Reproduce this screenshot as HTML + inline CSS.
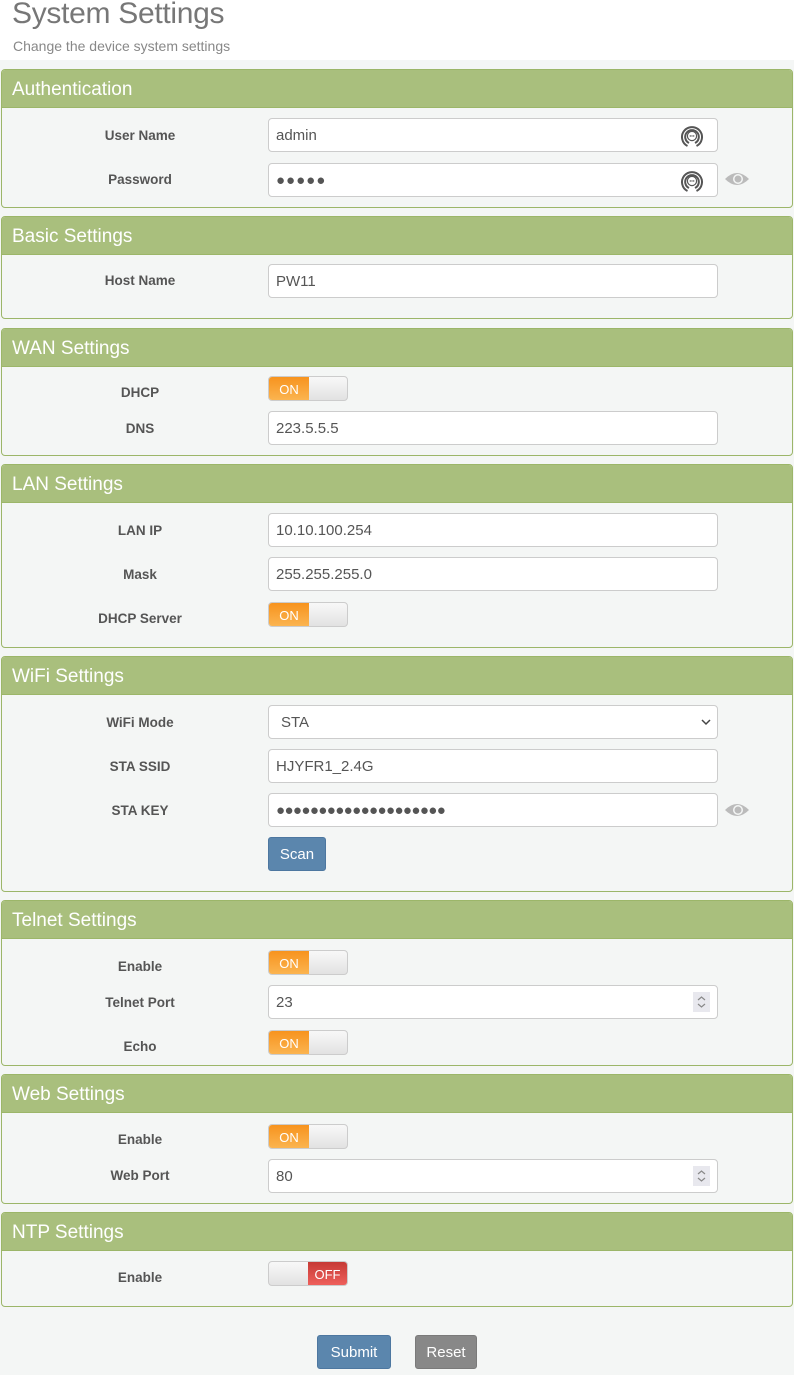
<!DOCTYPE html>
<html><head><meta charset="utf-8"><style>
*{box-sizing:border-box;margin:0;padding:0}
body{width:794px;height:1375px;background:#f4f6f5;font-family:"Liberation Sans",sans-serif;position:relative;overflow:hidden;color:#555}
.top{position:absolute;left:0;top:0;width:794px;height:60px;background:#fff}
h1{position:absolute;left:12px;top:-3px;font-size:30px;font-weight:300;color:#777;letter-spacing:-0.3px}
.sub{position:absolute;left:13px;top:38px;font-size:14px;color:#888}
.panel{position:absolute;left:1px;width:792px;border:1px solid #9cb669;border-radius:4px;background:#f4f6f5;overflow:hidden}
.ph{height:38px;background:#a9bf7d;color:#fff;font-size:19px;padding:9px 10px;border-bottom:1px solid #9cb669}
.lb{position:absolute;left:40px;width:200px;text-align:center;font-size:13.5px;font-weight:bold;color:#555;margin-top:1px}
.in{position:absolute;left:268px;width:450px;height:34px;background:#fff;border:1px solid #ccc;border-radius:4px;font-size:15px;color:#555;padding:8px 7px}
.tg{position:absolute;left:268px;width:80px;height:25px;border:1px solid #ccc;border-radius:4px;overflow:hidden;background:linear-gradient(#f8f8f8,#e2e2e2)}
.tg .on{position:absolute;left:0;top:0;width:40px;height:100%;background:linear-gradient(#f7931e,#fbb450);color:#fff;font-size:13px;text-align:center;line-height:25px}
.tg .off{position:absolute;right:0;top:0;width:39px;height:100%;background:linear-gradient(#c63a35,#ee5f5b);color:#fff;font-size:13px;text-align:center;line-height:25px}
.eye{position:absolute;left:724px;width:26px;height:16px}
.btn{position:absolute;height:34px;border-radius:3px;color:#fff;font-size:15px;text-align:center;line-height:34px}
.kc{position:absolute;right:12px;top:4px;width:26px;height:26px}
.sp{position:absolute;right:7px;top:6px;width:17px;height:20px;background:#e8e8ee}
</style></head><body>
<div class="top"><h1>System Settings</h1><div class="sub">Change the device system settings</div></div>

<div class="panel" style="top:69px;height:139px"><div class="ph">Authentication</div></div>
<div class="panel" style="top:216px;height:103px"><div class="ph">Basic Settings</div></div>
<div class="panel" style="top:328px;height:128px"><div class="ph">WAN Settings</div></div>
<div class="panel" style="top:464px;height:184px"><div class="ph">LAN Settings</div></div>
<div class="panel" style="top:656px;height:236px"><div class="ph">WiFi Settings</div></div>
<div class="panel" style="top:900px;height:166px"><div class="ph">Telnet Settings</div></div>
<div class="panel" style="top:1074px;height:130px"><div class="ph">Web Settings</div></div>
<div class="panel" style="top:1212px;height:95px"><div class="ph">NTP Settings</div></div>

<div class="lb" style="top:127px">User Name</div>
<div class="in" style="top:118px">admin<svg class="kc" viewBox="0 0 26 26"><path d="M8.5 23A10 10 0 1 1 17.5 23" fill="none" stroke="#555" stroke-width="2"/><path d="M10 20A6.8 6.8 0 1 1 16 20" fill="none" stroke="#555" stroke-width="2"/><circle cx="13" cy="13" r="4.6" fill="none" stroke="#555" stroke-width="1.2"/><circle cx="11.3" cy="13" r=".7" fill="#555"/><circle cx="13" cy="13" r=".7" fill="#555"/><circle cx="14.7" cy="13" r=".7" fill="#555"/></svg></div>
<div class="lb" style="top:171px">Password</div>
<div class="in" style="top:163px;letter-spacing:1px">●●●●●<svg class="kc" viewBox="0 0 26 26"><path d="M8.5 23A10 10 0 1 1 17.5 23" fill="none" stroke="#555" stroke-width="2"/><path d="M10 20A6.8 6.8 0 1 1 16 20" fill="none" stroke="#555" stroke-width="2"/><circle cx="13" cy="13" r="4.6" fill="none" stroke="#555" stroke-width="1.2"/><circle cx="11.3" cy="13" r=".7" fill="#555"/><circle cx="13" cy="13" r=".7" fill="#555"/><circle cx="14.7" cy="13" r=".7" fill="#555"/></svg></div>
<svg class="eye" style="top:171px" viewBox="0 0 26 16"><path d="M1 8Q13 -4 25 8Q13 20 1 8Z" fill="#bbb"/><circle cx="14" cy="8" r="5" fill="#f4f6f5"/><circle cx="14" cy="8" r="3.5" fill="#bbb"/></svg>

<div class="lb" style="top:272px">Host Name</div>
<div class="in" style="top:264px">PW11</div>

<div class="lb" style="top:384px">DHCP</div>
<div class="tg" style="top:376px"><div class="on">ON</div></div>
<div class="lb" style="top:420px">DNS</div>
<div class="in" style="top:411px">223.5.5.5</div>

<div class="lb" style="top:522px">LAN IP</div>
<div class="in" style="top:513px">10.10.100.254</div>
<div class="lb" style="top:566px">Mask</div>
<div class="in" style="top:557px">255.255.255.0</div>
<div class="lb" style="top:610px">DHCP Server</div>
<div class="tg" style="top:602px"><div class="on">ON</div></div>

<div class="lb" style="top:714px">WiFi Mode</div>
<div class="in" style="top:705px;padding-left:12px">STA<svg style="position:absolute;right:6px;top:12px" width="10" height="8" viewBox="0 0 10 8"><path d="M1 2L5 6L9 2" fill="none" stroke="#444" stroke-width="1.5"/></svg></div>
<div class="lb" style="top:758px">STA SSID</div>
<div class="in" style="top:749px">HJYFR1_2.4G</div>
<div class="lb" style="top:802px">STA KEY</div>
<div class="in" style="top:793px;font-size:15px;letter-spacing:-0.6px">●●●●●●●●●●●●●●●●●●●●</div>
<svg class="eye" style="top:802px" viewBox="0 0 26 16"><path d="M1 8Q13 -4 25 8Q13 20 1 8Z" fill="#bbb"/><circle cx="14" cy="8" r="5" fill="#f4f6f5"/><circle cx="14" cy="8" r="3.5" fill="#bbb"/></svg>
<div class="btn" style="left:268px;top:837px;width:58px;background:#5b86ad;border:1px solid #4d77a0">Scan</div>

<div class="lb" style="top:958px">Enable</div>
<div class="tg" style="top:950px"><div class="on">ON</div></div>
<div class="lb" style="top:994px">Telnet Port</div>
<div class="in" style="top:985px">23<div class="sp"><svg width="17" height="20" viewBox="0 0 17 20"><path d="M5 8L8.5 5L12 8M5 12L8.5 15L12 12" fill="none" stroke="#888" stroke-width="1.2"/></svg></div></div>
<div class="lb" style="top:1038px">Echo</div>
<div class="tg" style="top:1030px"><div class="on">ON</div></div>

<div class="lb" style="top:1131px">Enable</div>
<div class="tg" style="top:1124px"><div class="on">ON</div></div>
<div class="lb" style="top:1167px">Web Port</div>
<div class="in" style="top:1159px">80<div class="sp"><svg width="17" height="20" viewBox="0 0 17 20"><path d="M5 8L8.5 5L12 8M5 12L8.5 15L12 12" fill="none" stroke="#888" stroke-width="1.2"/></svg></div></div>

<div class="lb" style="top:1269px">Enable</div>
<div class="tg" style="top:1261px"><div class="off">OFF</div></div>

<div class="btn" style="left:317px;top:1335px;width:74px;background:#5b86ad;border:1px solid #4d77a0">Submit</div>
<div class="btn" style="left:415px;top:1335px;width:62px;background:#888;border:1px solid #7a7a7a">Reset</div>
</body></html>
